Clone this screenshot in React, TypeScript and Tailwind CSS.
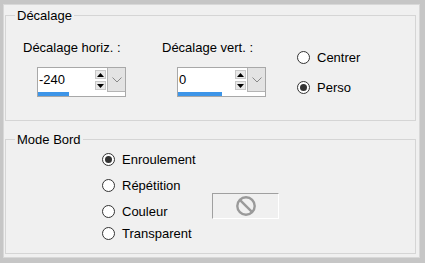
import React from "react";

const font = { fontFamily: '"Liberation Sans", Arial, sans-serif' };

const Radio = ({ checked, label }: { checked?: boolean; label: string }) => (
  <div className="flex items-center h-[15px]">
    <span className="w-[13px] h-[13px] rounded-full border border-[#333] bg-white flex items-center justify-center">
      {checked && <span className="w-[7px] h-[7px] rounded-full bg-[#333]" />}
    </span>
    <span className="ml-[7px] text-[13px] leading-[15px] text-black">{label}</span>
  </div>
);

const SpinBox = ({ value, bar }: { value: string; bar: number }) => (
  <div className="w-[89px] h-[30px] border border-[#a8a8a8] bg-white flex flex-col">
    <div className="flex h-[25px]">
      <div className="flex-1 pl-[1px] pt-[4px] text-[13px] leading-[15px]">{value}</div>
      <div className="w-[11px] flex flex-col justify-center gap-[2px] mr-[1px]">
        <div className="h-[9px] bg-[#e8e8e8] border border-[#c8c8c8] flex items-center justify-center">
          <svg width="7" height="4" viewBox="0 0 7 4"><path d="M3.5 0 L7 4 L0 4 Z" fill="#000" /></svg>
        </div>
        <div className="h-[9px] bg-[#e8e8e8] border border-[#c8c8c8] flex items-center justify-center">
          <svg width="7" height="4" viewBox="0 0 7 4"><path d="M0 0 L7 0 L3.5 4 Z" fill="#000" /></svg>
        </div>
      </div>
      <div className="w-[18px] bg-[#e3e3e3] border-l border-b border-[#b4b4b4] flex items-center justify-center">
        <svg width="10" height="6" viewBox="0 0 10 6"><path d="M0.5 0.5 L5 5 L9.5 0.5" stroke="#888" fill="none" /></svg>
      </div>
    </div>
    <div className="flex-1 flex items-start">
      <div className="h-[4px] bg-[#3d95e8]" style={{ width: bar }} />
    </div>
  </div>
);

export default function App() {
  return (
    <div className="w-[425px] h-[263px] bg-[#c6c6c6] pt-[4px] pl-[3px] pr-[5px] pb-[5px]" style={font}>
      <div className="w-full h-full bg-[#f0f0f0] border border-[#d8d8d8] pl-[1px] pr-[3px]">
        <fieldset className="mt-[3px] h-[113px] border border-[#d5d5d5]">
          <legend className="ml-[9px] px-[2px] text-[13px] leading-[15px]">Décalage</legend>
          <div className="flex">
            <div className="w-[156px] pl-[17px] pt-[17px]">
              <div className="text-[13px] leading-[15px] whitespace-nowrap">Décalage horiz. :</div>
              <div className="ml-[14px] mt-[12px]">
                <SpinBox value="-240" bar={31} />
              </div>
            </div>
            <div className="w-[135px] pt-[17px]">
              <div className="text-[13px] leading-[15px] whitespace-nowrap">Décalage vert. :</div>
              <div className="ml-[15px] mt-[12px]">
                <SpinBox value="0" bar={44} />
              </div>
            </div>
            <div className="pt-[27px] flex flex-col gap-[15px]">
              <Radio label="Centrer" />
              <Radio label="Perso" checked />
            </div>
          </div>
        </fieldset>
        <fieldset className="mt-[11px] h-[122px] border border-[#d5d5d5]">
          <legend className="ml-[9px] px-[2px] text-[13px] leading-[15px]">Mode Bord</legend>
          <div className="pl-[96px] pt-[5px] flex flex-col">
            <Radio label="Enroulement" checked />
            <div className="mt-[11px]">
              <Radio label="Répétition" />
            </div>
            <div className="flex items-end">
              <div className="w-[110px]">
                <Radio label="Couleur" />
              </div>
              <div className="w-[67px] h-[26px] border-t border-l border-[#a0a0a0] border-r border-b border-r-white border-b-white flex items-center justify-center">
                <svg width="22" height="22" viewBox="0 0 24 24" fill="none" stroke="#9a9a9a" strokeWidth="2.6">
                  <circle cx="12" cy="12" r="9.5" />
                  <path d="M5.3 5.3 18.7 18.7" />
                </svg>
              </div>
            </div>
            <div className="mt-[7px]">
              <Radio label="Transparent" />
            </div>
          </div>
        </fieldset>
      </div>
    </div>
  );
}
